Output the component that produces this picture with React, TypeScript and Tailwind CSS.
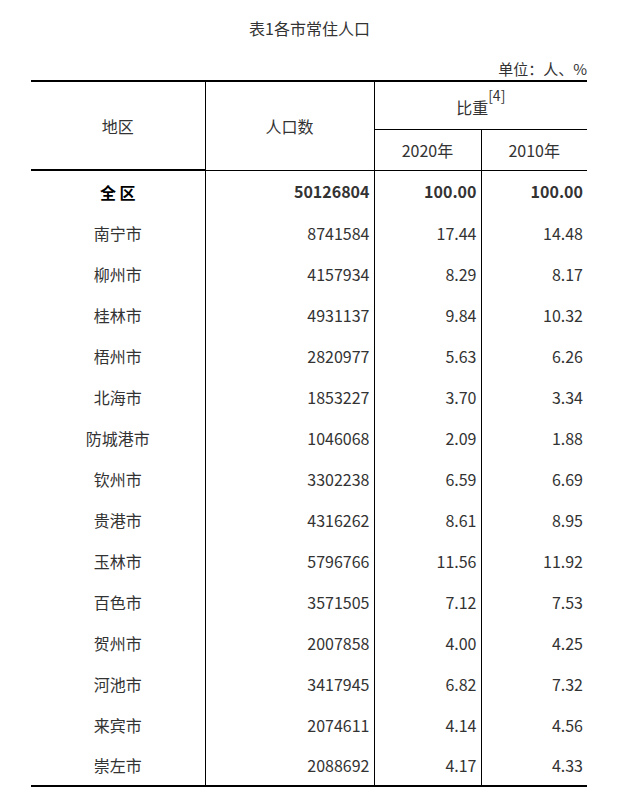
const rows: [string, string, string, string][] = [
  ['南宁市', '8741584', '17.44', '14.48'],
  ['柳州市', '4157934', '8.29', '8.17'],
  ['桂林市', '4931137', '9.84', '10.32'],
  ['梧州市', '2820977', '5.63', '6.26'],
  ['北海市', '1853227', '3.70', '3.34'],
  ['防城港市', '1046068', '2.09', '1.88'],
  ['钦州市', '3302238', '6.59', '6.69'],
  ['贵港市', '4316262', '8.61', '8.95'],
  ['玉林市', '5796766', '11.56', '11.92'],
  ['百色市', '3571505', '7.12', '7.53'],
  ['贺州市', '2007858', '4.00', '4.25'],
  ['河池市', '3417945', '6.82', '7.32'],
  ['来宾市', '2074611', '4.14', '4.56'],
  ['崇左市', '2088692', '4.17', '4.33'],
];

export default function App() {
  return (
    <div
      className="w-[632px] h-[798px] bg-white text-[#333] text-[16px]"
      style={{ fontFamily: '"Noto Sans CJK SC", "Noto Sans", sans-serif' }}
    >
      <h1 className="pt-[15px] h-[47px] text-center text-[16px] leading-[26px] pr-[13px]">表1各市常住人口</h1>
      <div className="ml-[31px] w-[556px]">
        <div className="h-[33px] flex items-end justify-end text-[15px] leading-[20px] pb-[1px]">单位：人、%</div>
        <table className="w-full border-collapse table-fixed">
          <colgroup>
            <col className="w-[174px]" />
            <col className="w-[169px]" />
            <col className="w-[107px]" />
            <col className="w-[106px]" />
          </colgroup>
          <thead>
            <tr className="h-[48px] border-t-2 border-black">
              <th rowSpan={2} className="font-normal text-center border-r border-b-2 border-black">地区</th>
              <th rowSpan={2} className="font-normal text-center border-r border-b border-black">人口数</th>
              <th colSpan={2} className="font-normal text-center border-b border-black pt-[4px]">
                比重<sup className="text-[14px] align-[6px]">[4]</sup>
              </th>
            </tr>
            <tr className="h-[41px]">
              <th className="font-normal text-center border-r border-b border-black">2020年</th>
              <th className="font-normal text-center border-b border-black">2010年</th>
            </tr>
          </thead>
          <tbody>
            <tr className="h-[42px] font-bold">
              <td className="text-center border-r border-black text-black">全 区</td>
              <td className="text-right pr-[4px] border-r border-black">50126804</td>
              <td className="text-right pr-[4px] border-r border-black">100.00</td>
              <td className="text-right pr-[4px]">100.00</td>
            </tr>
            {rows.map((r, i) => (
              <tr key={r[0]} className={`h-[41px] ${i === rows.length - 1 ? 'border-b-2 border-black' : ''}`}>
                <td className="text-center border-r border-black">{r[0]}</td>
                <td className="text-right pr-[4px] border-r border-black">{r[1]}</td>
                <td className="text-right pr-[4px] border-r border-black">{r[2]}</td>
                <td className="text-right pr-[4px]">{r[3]}</td>
              </tr>
            ))}
          </tbody>
        </table>
      </div>
    </div>
  );
}
